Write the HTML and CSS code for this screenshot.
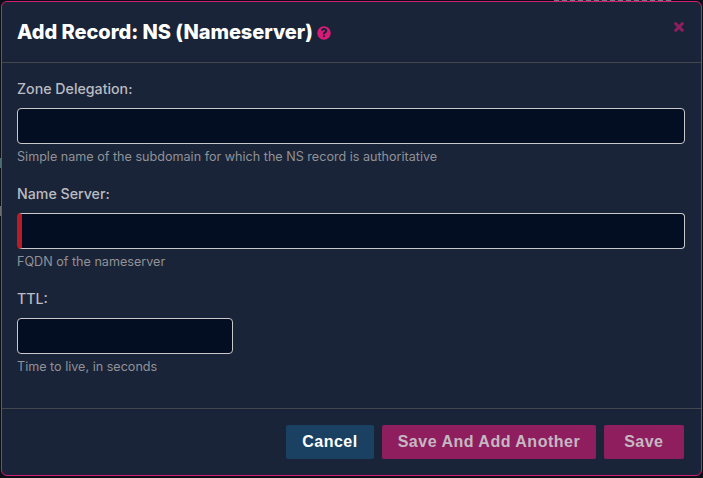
FILE: index.html
```html
<!DOCTYPE html>
<html lang="en">
<head>
<meta charset="utf-8">
<title>Add Record: NS (Nameserver)</title>
<link rel="stylesheet" href="styles.css">
</head>
<body>
<div class="modal">
  <header class="modal-header">
    <h1 class="modal-title">Add Record: NS (Nameserver)</h1>
    <svg class="help" viewBox="0 0 512 512" aria-hidden="true"><path d="M256 8a248 248 0 1 0 0 496 248 248 0 0 0 0-496zm0 400a40 40 0 1 1 0-80 40 40 0 0 1 0 80zm42-125v6c0 7-5 12-12 12h-60c-7 0-12-5-12-12v-11c0-39 30-55 52-68 19-10 31-18 31-32 0-19-24-31-43-31-25 0-36 12-52 33-4 5-12 6-17 2l-36-28c-5-4-6-11-3-16 27-40 62-62 116-62 56 0 116 44 116 102 0 77-80 78-80 105z"/></svg>
    <button class="close" type="button" aria-label="Close">
      <svg viewBox="0 0 12 12" aria-hidden="true"><path d="M2.4 2.4l7.2 7.2M9.6 2.4l-7.2 7.2"/></svg>
    </button>
  </header>
  <form class="modal-body">
    <div class="field">
      <label class="label" for="zone">Zone Delegation:</label>
      <input class="input" id="zone" type="text">
      <p class="hint">Simple name of the subdomain for which the NS record is authoritative</p>
    </div>
    <div class="field">
      <label class="label" for="ns">Name Server:</label>
      <input class="input input-required" id="ns" type="text">
      <p class="hint">FQDN of the nameserver</p>
    </div>
    <div class="field">
      <label class="label" for="ttl">TTL:</label>
      <input class="input input-small" id="ttl" type="text">
      <p class="hint">Time to live, in seconds</p>
    </div>
  </form>
  <footer class="modal-footer">
    <button class="btn btn-cancel" type="button">Cancel</button>
    <button class="btn btn-save btn-another" type="button">Save And Add Another</button>
    <button class="btn btn-save btn-last" type="button">Save</button>
  </footer>
</div>
</body>
</html>
```
FILE: styles.css
```css
* { box-sizing: border-box; }
html, body { margin: 0; height: 100%; }
body {
  background-color: #0d0f16;
  /* slivers of the page behind the dialog, visible along its top and left edges */
  background-image:
    repeating-linear-gradient(90deg, #77797e 0 5px, #23262e 5px 8px),
    linear-gradient(#4d6b70, #4d6b70),
    linear-gradient(#6a6c70, #6a6c70);
  background-size: 118px 1px, 1px 10px, 1px 10px;
  background-position: 554px 0, 0 158px, 0 206px;
  background-repeat: no-repeat;
  font-family: Inter, "Liberation Sans", sans-serif;
  overflow: hidden;
  padding: 1px;
}
.modal {
  height: 475px;
  background: #1a2438;
  border: 1px solid #d11f77;
  border-radius: 6px;
  display: flex;
  flex-direction: column;
}
.modal-header {
  height: 61px;
  flex: none;
  border-bottom: 1px solid #44474d;
  display: flex;
  align-items: center;
  padding: 0 15px;
  position: relative;
}
.modal-title {
  margin: 0;
  font-size: 20px;
  font-weight: 800;
  letter-spacing: -0.04px;
  line-height: 24px;
  color: #fff;
}
.help {
  width: 14px;
  height: 14px;
  margin-left: 4px;
  margin-top: 2px;
  fill: #d81b78;
}
.close {
  position: absolute;
  top: 18px;
  right: 15px;
  width: 14px;
  height: 14px;
  padding: 0;
  background: none;
  border: 0;
}
.close svg {
  display: block;
  width: 14px;
  height: 14px;
  stroke: #8f1e5f;
  stroke-width: 2.6;
  fill: none;
}
.modal-body {
  flex: 1;
  padding: 17px 16px 0 15px;
  display: flex;
  flex-direction: column;
  gap: 19px;
}
.field { display: flex; flex-direction: column; }
.label {
  font-size: 14.2px;
  font-weight: 500;
  line-height: 18px;
  color: #bbbcc1;
  margin-bottom: 10px;
}
.input {
  display: block;
  width: 100%;
  height: 36px;
  background: #030e22;
  border: 1px solid #c9c9cc;
  border-radius: 4px;
  padding: 0 10px;
  color: #fff;
}
.input-required { border-left: 5px solid #b91c25; }
.input-small { width: 216px; }
.hint {
  margin: 4px 0 0;
  font-size: 12.6px;
  line-height: 18px;
  color: #909297;
}
.modal-footer {
  height: 67px;
  flex: none;
  border-top: 1px solid #44474d;
  display: flex;
  justify-content: flex-end;
  align-items: flex-start;
  gap: 8px;
  padding: 16px 17px 0 0;
}
.btn {
  height: 34px;
  border: 0;
  border-radius: 2px;
  font-family: "Liberation Sans", Arial, sans-serif;
  font-size: 16px;
  font-weight: 700;
  letter-spacing: 0.5px;
  padding: 0 16.5px;
}
.btn-cancel { background: #1a4062; color: #fff; }
.btn-save { background: #8f1e5f; color: #c5b8c2; }
.btn-another { padding: 0 15.5px; }
.btn-last { padding: 0 20.5px; }
```
